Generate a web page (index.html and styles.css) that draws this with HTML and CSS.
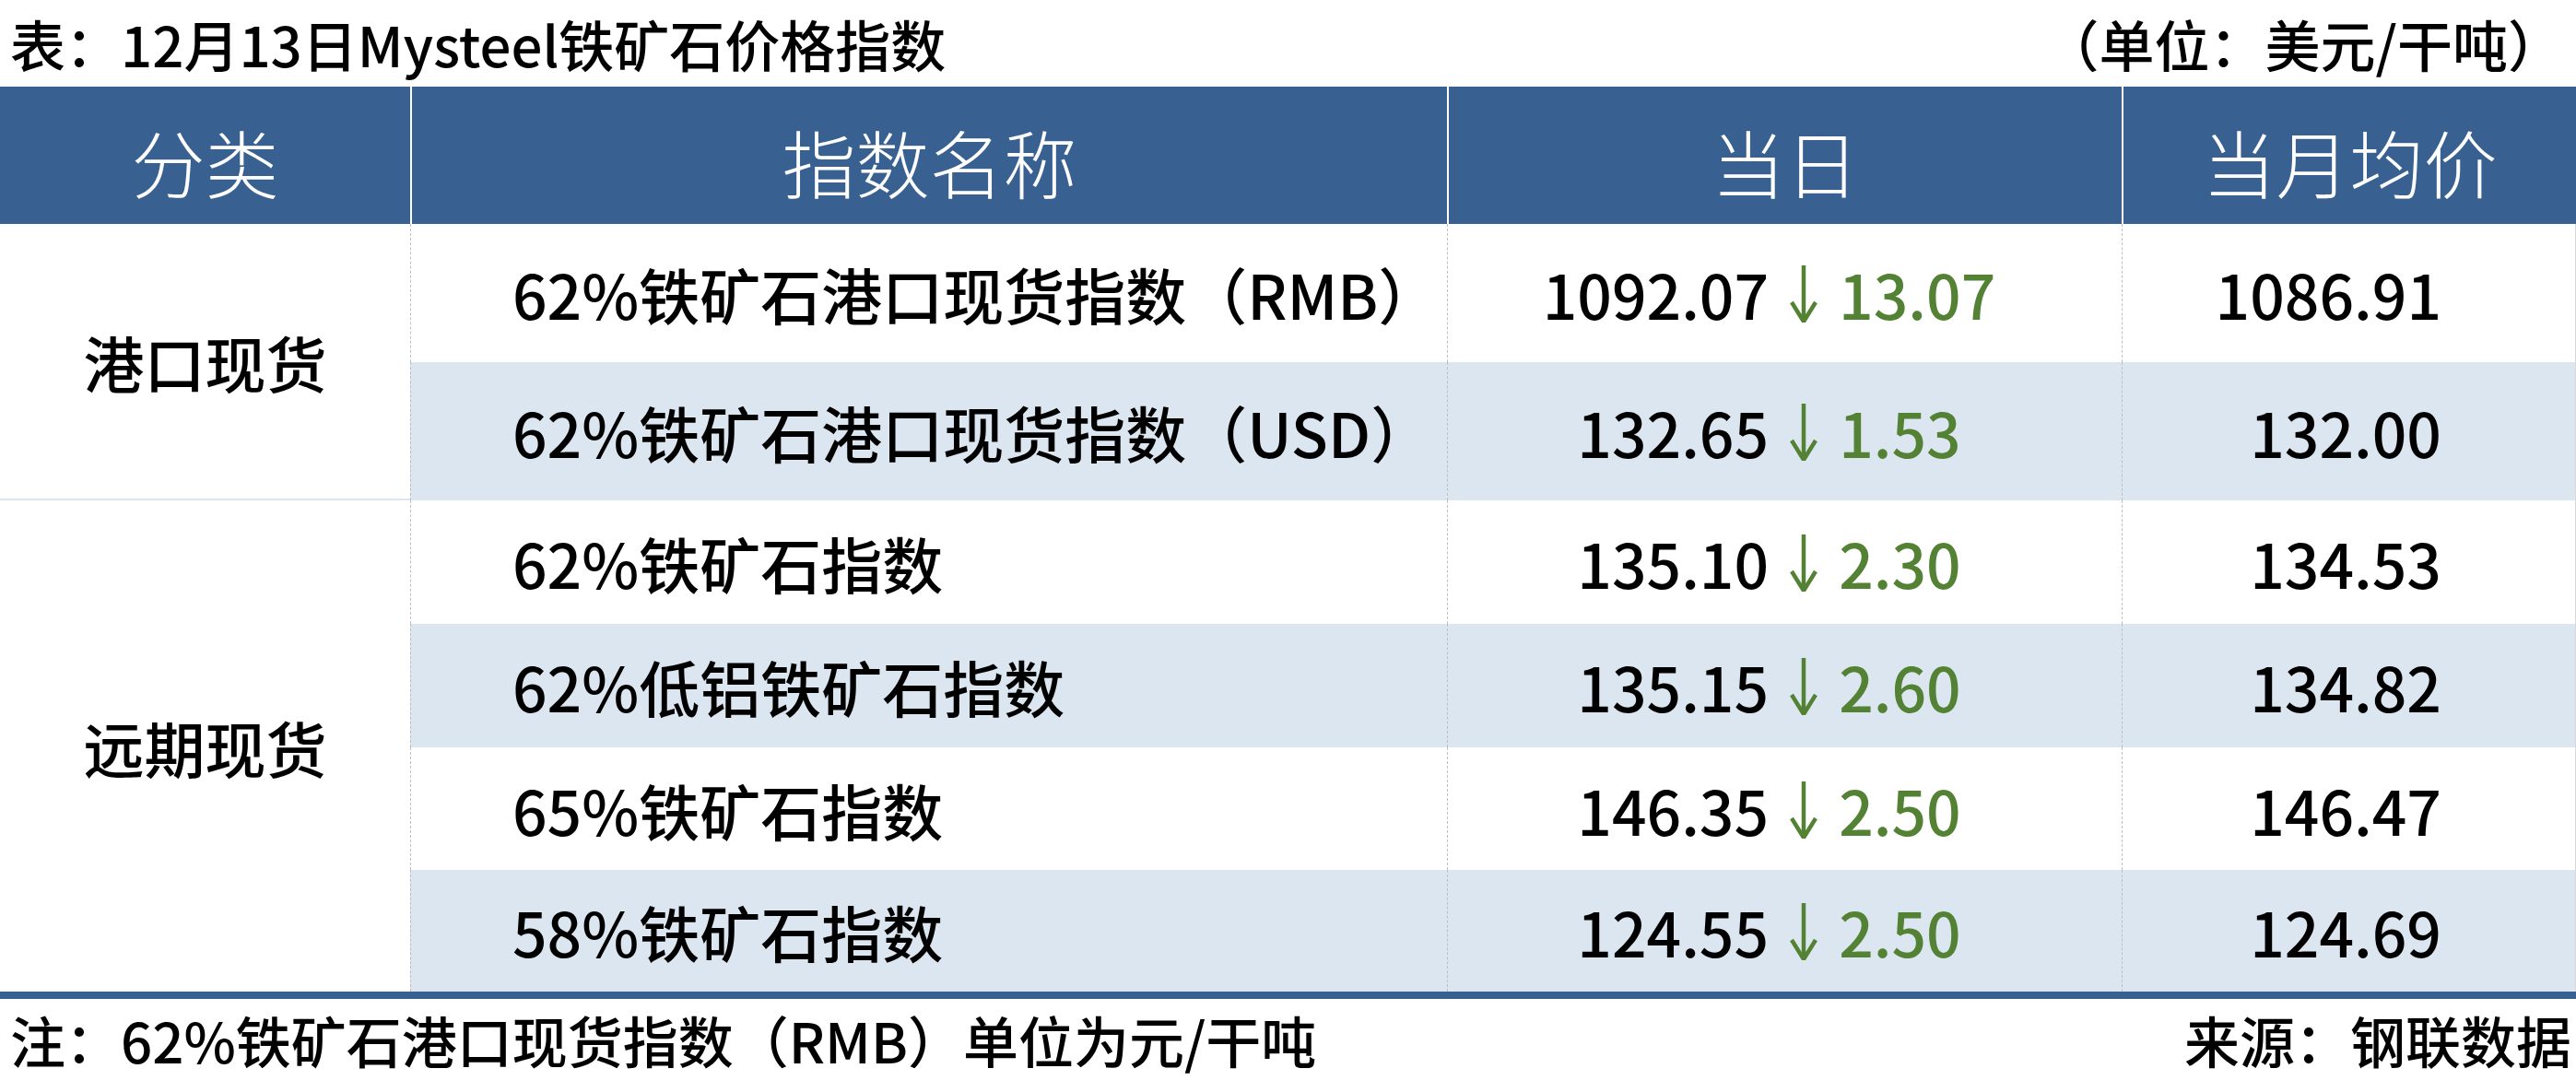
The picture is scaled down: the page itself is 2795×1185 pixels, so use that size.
FILE: index.html
```html
<!DOCTYPE html>
<html lang="zh-CN">
<head>
<meta charset="utf-8">
<title>12月13日Mysteel铁矿石价格指数</title>
<link rel="stylesheet" href="styles.css">
</head>
<body>
<div class="page">
  <div class="caption">
    <span class="title">表：12月13日Mysteel铁矿石价格指数</span>
    <span class="unit">（单位：美元/干吨）</span>
  </div>
  <div class="table">
    <div class="th first">分类</div>
    <div class="th">指数名称</div>
    <div class="th now-h">当日</div>
    <div class="th">当月均价</div>

    <div class="group g1">港口现货</div>
    <div class="group g2">远期现货</div>

    <div class="td name">62%铁矿石港口现货指数（RMB）</div>
    <div class="td now"><span class="val">1092.07</span><svg class="arrow" viewBox="0 0 32 62"><path d="M16 0V59M3 40L16 61L29 40"/></svg><span class="chg">13.07</span></div>
    <div class="td avg">1086.91</div>

    <div class="td name alt">62%铁矿石港口现货指数（USD）</div>
    <div class="td now alt"><span class="val">132.65</span><svg class="arrow" viewBox="0 0 32 62"><path d="M16 0V59M3 40L16 61L29 40"/></svg><span class="chg">1.53</span></div>
    <div class="td avg alt">132.00</div>

    <div class="td name">62%铁矿石指数</div>
    <div class="td now"><span class="val">135.10</span><svg class="arrow" viewBox="0 0 32 62"><path d="M16 0V59M3 40L16 61L29 40"/></svg><span class="chg">2.30</span></div>
    <div class="td avg">134.53</div>

    <div class="td name alt">62%低铝铁矿石指数</div>
    <div class="td now alt"><span class="val">135.15</span><svg class="arrow" viewBox="0 0 32 62"><path d="M16 0V59M3 40L16 61L29 40"/></svg><span class="chg">2.60</span></div>
    <div class="td avg alt">134.82</div>

    <div class="td name">65%铁矿石指数</div>
    <div class="td now"><span class="val">146.35</span><svg class="arrow" viewBox="0 0 32 62"><path d="M16 0V59M3 40L16 61L29 40"/></svg><span class="chg">2.50</span></div>
    <div class="td avg">146.47</div>

    <div class="td name alt">58%铁矿石指数</div>
    <div class="td now alt"><span class="val">124.55</span><svg class="arrow" viewBox="0 0 32 62"><path d="M16 0V59M3 40L16 61L29 40"/></svg><span class="chg">2.50</span></div>
    <div class="td avg alt">124.69</div>
  </div>
  <div class="foot">
    <span class="note">注：62%铁矿石港口现货指数（RMB）单位为元/干吨</span>
    <span class="source">来源：钢联数据</span>
  </div>
</div>
</body>
</html>
```

FILE: styles.css
```css
html, body {
  margin: 0;
  padding: 0;
  background: #ffffff;
}

body {
  font-family: "Noto Sans CJK SC", "Noto Sans", sans-serif;
  color: #000000;
}

.page {
  width: 2795px;
  height: 1185px;
  overflow: hidden;
}

.caption {
  height: 94px;
  display: flex;
  justify-content: space-between;
  align-items: center;
  padding: 0 14px 0 11px;
  font-size: 60px;
  font-weight: 500;
  line-height: 1;
}

.table {
  display: grid;
  width: 2795px;
  grid-template-columns: 445px 1125px 732px 493px;
  grid-template-rows: 149px 150px 150px 134px 134px 133px 132px;
  border-bottom: 8px solid #386192;
}

.th {
  background: #386192;
  color: #ffffff;
  font-size: 80px;
  font-weight: 300;
  display: flex;
  align-items: center;
  justify-content: center;
  border-left: 2px solid #ffffff;
  box-sizing: border-box;
  padding-top: 10px;
}

.th.first {
  border-left: none;
}

.group {
  grid-column: 1;
  display: flex;
  align-items: center;
  justify-content: center;
  font-size: 66px;
  font-weight: 500;
  background: #ffffff;
  box-sizing: border-box;
}

.g1 {
  grid-row: 2 / span 2;
  border-bottom: 2px solid #dce6f1;
}

.g2 {
  grid-row: 4 / span 4;
}

.td {
  display: flex;
  align-items: center;
  font-size: 66px;
  font-weight: 500;
  border-left: 1px dashed #bfbfbf;
  box-sizing: border-box;
  background: #ffffff;
  white-space: nowrap;
}

.td.alt {
  background: #dce6f1;
}

.name {
  padding-left: 110px;
}

.now {
  justify-content: center;
  padding-right: 34px;
}

.avg {
  justify-content: flex-end;
  padding-right: 145px;
  border-right: 1px solid #d9d9d9;
}

.val,
.chg {
  line-height: 1;
}

.chg {
  color: #548235;
}

.arrow {
  width: 32px;
  height: 62px;
  margin: 0 22px 0 22px;
  position: relative;
  top: 1px;
}

.arrow path {
  fill: none;
  stroke: #548235;
  stroke-width: 4.5;
  stroke-linejoin: miter;
}

.foot {
  height: 88px;
  display: flex;
  justify-content: space-between;
  align-items: center;
  padding: 0 5px 0 11px;
  font-size: 60px;
  font-weight: 500;
  line-height: 1;
}
```
